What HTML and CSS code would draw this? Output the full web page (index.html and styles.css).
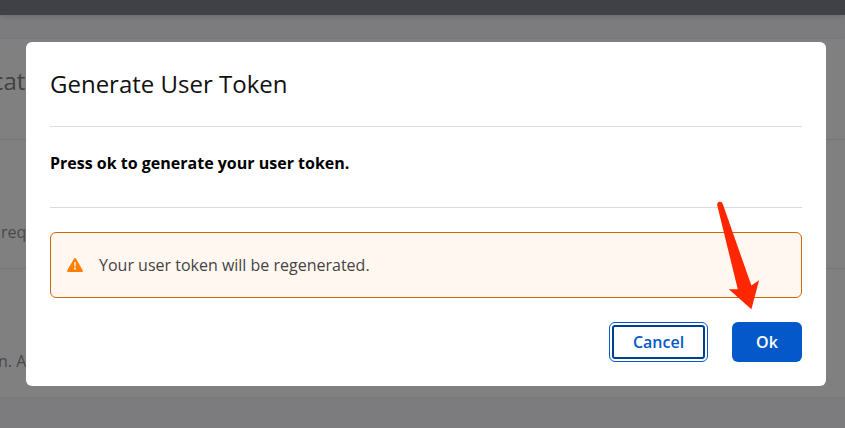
FILE: index.html
```html
<!DOCTYPE html>
<html lang="en">
<head>
<meta charset="utf-8">
<title>Generate User Token</title>
<link rel="stylesheet" href="styles.css">
</head>
<body>
<div class="page">
  <header class="topbar"></header>
  <main class="card">
    <section class="row row-title"><span>cat</span></section>
    <section class="row row-request"><span>req</span></section>
    <section class="row row-token"><span>n. A</span></section>
  </main>
</div>
<div class="overlay">
  <div class="modal" role="dialog" aria-labelledby="title">
    <h2 class="modal-title" id="title">Generate User Token</h2>
    <p class="modal-body">Press ok to generate your user token.</p>
    <div class="alert">
      <svg class="alert-icon" viewBox="0 0 16 14" width="16" height="14">
        <path fill="#ff8000" d="M6.9.7a1.25 1.25 0 0 1 2.2 0l6.6 11.5A1.2 1.2 0 0 1 14.7 14H1.3a1.2 1.2 0 0 1-1-1.800z"/>
        <path fill="#fff7f0" d="M7.1 4.3h1.8l-.25 4.2h-1.3zM7.1 9.6h1.8v1.8H7.1z"/>
      </svg>
      <span>Your user token will be regenerated.</span>
    </div>
    <div class="actions">
      <button class="btn btn-secondary"><span>Cancel</span></button>
      <button class="btn btn-primary">Ok</button>
    </div>
  </div>
  <svg class="pointer" viewBox="0 0 44 110" width="44" height="110">
    <path fill="#ff2600" d="M.2 5.2C.1 2.700 1 1.700 3 1.700 4.500 1.700 5.200 2.500 5.800 4L34.400 85.600 42.100 80.300 34.400 109.200 11.800 89.300 20.800 89.300z"/>
  </svg>
</div>
</body>
</html>
```
FILE: styles.css
```css
* { box-sizing: border-box; }
body {
  margin: 0;
  height: 428px;
  overflow: hidden;
  font: 16px/24px "Open Sans", "Noto Sans", sans-serif;
  background: #7c7c7f;
}
.topbar {
  height: 15px;
  background: #404146;
  box-shadow: 0 1px 6px rgba(0, 0, 0, .14);
}
.card {
  height: 358px;
  margin-top: 24px;
  background: #808080;
  box-shadow: 0 0 4px rgba(0, 0, 0, .07);
}
.row {
  display: flex;
  align-items: center;
  color: #494949;
  white-space: nowrap;
}
.row-title {
  height: 101px;
  padding-bottom: 16px;
  border-bottom: 1px solid #73737a;
  font-size: 24px;
  color: #424242;
}
.row-title span { margin-left: -8px; }
.row-request {
  height: 129px;
  padding-top: 55px;
  border-bottom: 1px solid #73737a;
}
.row-request span { margin-left: 1px; }
.row-token { height: 128px; padding-top: 55px; }
.row-token span { margin-left: -2px; }
.overlay {
  position: absolute;
  inset: 0;
  padding: 42px 19px 42px 26px;
}
.modal {
  height: 344px;
  padding: 24px;
  background: #fff;
  border-radius: 6px;
}
.modal-title {
  height: 61px;
  margin: 0;
  border-bottom: 1px solid #d9d9e8;
  font-size: 24px;
  line-height: 36px;
  font-weight: 400;
  color: #111;
}
.modal-body {
  height: 81px;
  margin: 0 0 24px;
  padding-top: 24px;
  border-bottom: 1px solid #d9d9e8;
  font-weight: 700;
  color: #000;
}
.alert {
  display: flex;
  align-items: center;
  gap: 16px;
  height: 66px;
  padding: 0 16px;
  border: 1px solid #c96a05;
  border-radius: 6px;
  background: #fff7f0;
  color: #444;
}
.actions {
  display: flex;
  justify-content: flex-end;
  gap: 24px;
  margin-top: 24px;
}
.btn {
  height: 40px;
  padding: 0;
  border: 0;
  border-radius: 6px;
  font: 600 16px/24px "Open Sans", "Noto Sans", sans-serif;
}
.btn-primary { width: 70px; background: #0558c9; color: #fff; }
.btn-secondary {
  display: flex;
  width: 99px;
  padding: 2px;
  border: 1px solid #0558c9;
  background: #fff;
  color: #0558c9;
}
.btn-secondary span {
  flex: 1;
  border: 2px solid #00408f;
  border-radius: 3px;
  line-height: 30px;
}
.pointer { position: absolute; left: 717px; top: 200px; }
```
